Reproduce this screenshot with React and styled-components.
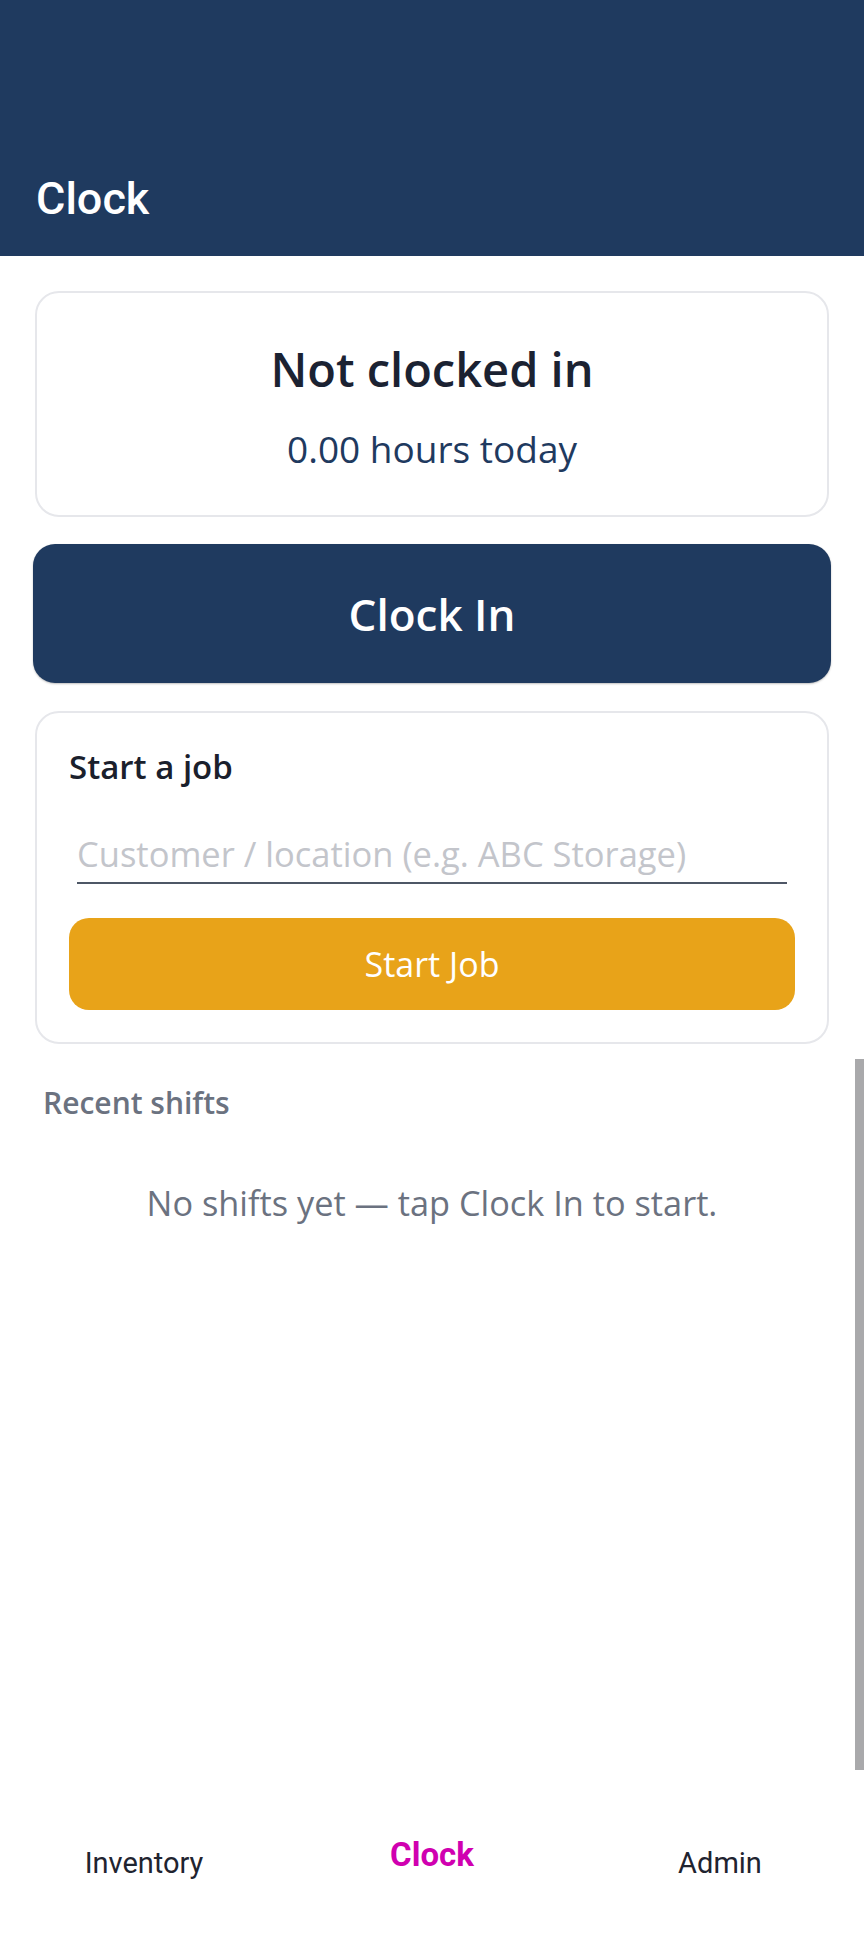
import React from "react";
import styled, { createGlobalStyle } from "styled-components";

const GlobalStyle = createGlobalStyle`
  html, body { margin: 0; padding: 0; background: #ffffff; }
  * { box-sizing: border-box; }
`;

const Screen = styled.div`
  width: 864px;
  height: 1939px;
  display: flex;
  flex-direction: column;
  overflow: hidden;
  background: #ffffff;
  font-family: "Open Sans", "Noto Sans", sans-serif;
`;

const Header = styled.header`
  height: 256px;
  flex: 0 0 256px;
  background: #1f3a5f;
  display: flex;
  align-items: flex-end;
  padding: 0 36px 31px;
`;

const HeaderTitle = styled.h1`
  margin: 0;
  font-family: Roboto, "Liberation Sans", sans-serif;
  font-weight: 500;
  font-size: 45px;
  line-height: 52px;
  color: #ffffff;
`;

const Content = styled.main`
  position: relative;
  flex: 1;
  display: flex;
  flex-direction: column;
  padding: 35px 35px 0;
`;

const ScrollIndicator = styled.div`
  position: absolute;
  right: 0;
  top: 803px;
  width: 9px;
  height: 711px;
  background: #a9a9ab;
`;

const Card = styled.section`
  border: 2px solid #e6e7eb;
  border-radius: 24px;
  background: #ffffff;
`;

const StatusCard = styled(Card)`
  height: 226px;
  display: flex;
  flex-direction: column;
  align-items: center;
  padding-top: 43px;
`;

const StatusTitle = styled.div`
  font-size: 47px;
  font-weight: 600;
  line-height: 66px;
  color: #1b2232;
`;

const Hours = styled.div`
  margin-top: 22px;
  font-size: 37px;
  font-weight: 500;
  line-height: 49px;
  color: #1f3a5f;
`;

const PrimaryButton = styled.button`
  margin: 27px -2px 0;
  height: 139px;
  border: none;
  border-radius: 22px;
  background: #1f3a5f;
  color: #ffffff;
  font-family: "Open Sans", "Noto Sans", sans-serif;
  font-size: 44px;
  font-weight: 600;
  box-shadow: 0 1px 2px rgba(0, 0, 0, 0.25);
  cursor: pointer;
`;

const JobCard = styled(Card)`
  margin-top: 28px;
  display: flex;
  flex-direction: column;
  padding: 31px 32px 32px;
`;

const JobTitle = styled.div`
  font-size: 33px;
  font-weight: 600;
  line-height: 46px;
  color: #1a202c;
`;

const JobInput = styled.input`
  margin: 40px 8px 0;
  height: 54px;
  padding: 0 0 6px 0;
  border: none;
  border-bottom: 2px solid #4e5766;
  outline: none;
  background: transparent;
  font-family: "Open Sans", "Noto Sans", sans-serif;
  font-size: 34.5px;
  line-height: 46px;
  color: #1a202c;
  &::placeholder {
    color: #c3c5cb;
  }
`;

const AccentButton = styled.button`
  margin-top: 34px;
  height: 92px;
  border: none;
  border-radius: 20px;
  background: #e8a319;
  color: #ffffff;
  font-family: "Open Sans", "Noto Sans", sans-serif;
  font-size: 34px;
  font-weight: 400;
  cursor: pointer;
`;

const SectionLabel = styled.div`
  margin: 38px 0 0 8px;
  font-size: 30px;
  font-weight: 600;
  line-height: 41px;
  color: #6b7280;
`;

const EmptyText = styled.div`
  margin-top: 57px;
  text-align: center;
  font-size: 34.3px;
  line-height: 46px;
  color: #6b7280;
`;

const TabBar = styled.nav`
  flex: 0 0 149px;
  height: 149px;
  display: grid;
  grid-template-columns: repeat(3, 1fr);
  background: #ffffff;
`;

const Tab = styled.div`
  display: flex;
  justify-content: center;
  align-items: flex-start;
  padding-top: ${(p) => (p.$active ? "45px" : "56px")};
  font-family: Roboto, "Liberation Sans", sans-serif;
  font-size: ${(p) => (p.$active ? "33px" : "29px")};
  font-weight: ${(p) => (p.$active ? 700 : 400)};
  line-height: normal;
  color: ${(p) => (p.$active ? "#d000b0" : "#1f2430")};
`;

export default function App() {
  return (
    <>
      <GlobalStyle />
      <Screen>
        <Header>
          <HeaderTitle>Clock</HeaderTitle>
        </Header>
        <Content>
          <StatusCard>
            <StatusTitle>Not clocked in</StatusTitle>
            <Hours>0.00 hours today</Hours>
          </StatusCard>
          <PrimaryButton>Clock In</PrimaryButton>
          <JobCard>
            <JobTitle>Start a job</JobTitle>
            <JobInput placeholder="Customer / location (e.g. ABC Storage)" />
            <AccentButton>Start Job</AccentButton>
          </JobCard>
          <SectionLabel>Recent shifts</SectionLabel>
          <EmptyText>No shifts yet — tap Clock In to start.</EmptyText>
          <ScrollIndicator />
        </Content>
        <TabBar>
          <Tab>Inventory</Tab>
          <Tab $active>Clock</Tab>
          <Tab>Admin</Tab>
        </TabBar>
      </Screen>
    </>
  );
}
